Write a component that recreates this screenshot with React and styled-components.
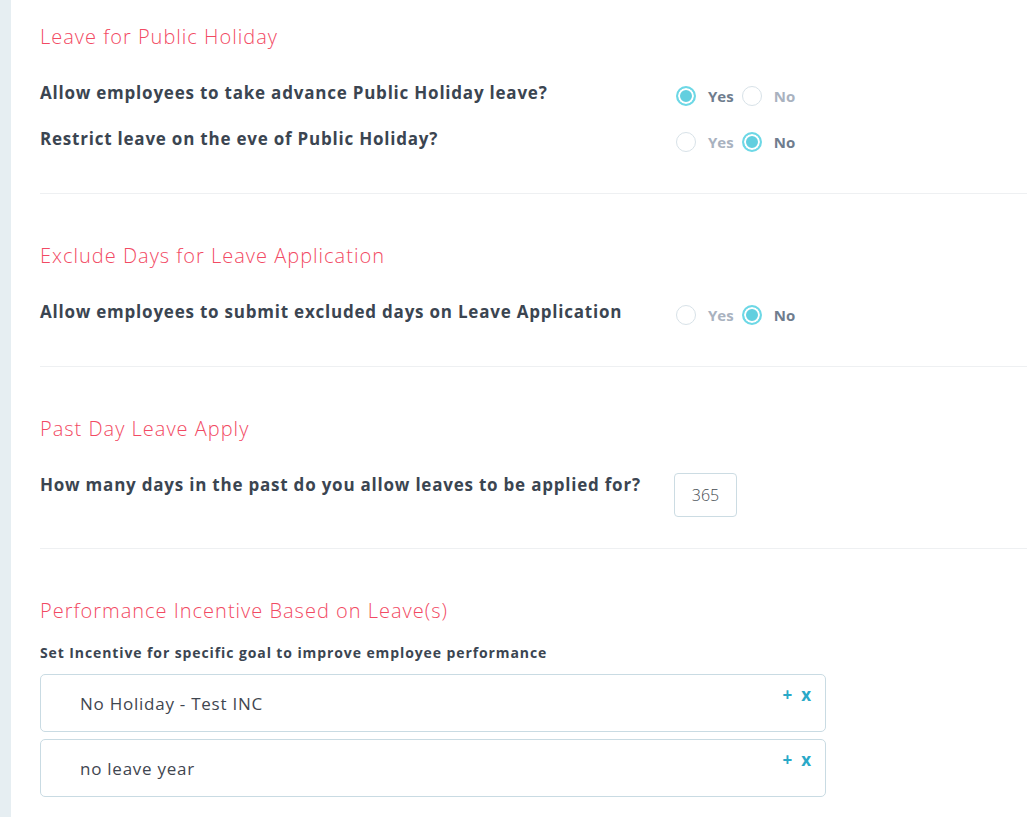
import React from 'react'
import styled, { createGlobalStyle } from 'styled-components'

const GlobalStyle = createGlobalStyle`
	html, body {
		margin: 0;
		padding: 0;
		background: #ffffff;
		font-family: "Open Sans", "DejaVu Sans", sans-serif;
	}
`

const sections = [
	{
		title: 'Leave for Public Holiday',
		questions: [
			{ label: 'Allow employees to take advance Public Holiday leave?', value: 'yes' },
			{ label: 'Restrict leave on the eve of Public Holiday?', value: 'no' },
		],
	},
	{
		title: 'Exclude Days for Leave Application',
		questions: [
			{ label: 'Allow employees to submit excluded days on Leave Application', value: 'no' },
		],
	},
]

const incentives = ['No Holiday - Test INC', 'no leave year']

const RadioPair = ({ value }) => (
	<RadioGroup>
		<Option>
			<Circle $checked={value === 'yes'} />
			<OptionLabel $checked={value === 'yes'}>Yes</OptionLabel>
		</Option>
		<Option>
			<Circle $checked={value === 'no'} />
			<OptionLabel $checked={value === 'no'}>No</OptionLabel>
		</Option>
	</RadioGroup>
)

const App = () => {
	const renderSections = () => sections.map(({ title, questions }, idx) => (
		<Section key={title} $first={idx === 0}>
			<Heading>{title}</Heading>
			<Rows>
				{questions.map(({ label, value }) => (
					<Row key={label}>
						<Question>{label}</Question>
						<RadioPair value={value} />
					</Row>
				))}
			</Rows>
		</Section>
	))

	return (
		<Wrapper>
			<GlobalStyle />
			<Strip />
			<Content>
				{renderSections()}

				<Section $pb={31}>
					<Heading>Past Day Leave Apply</Heading>
					<Rows>
						<Row>
							<Question>How many days in the past do you allow leaves to be applied for?</Question>
							<DaysInput type='text' defaultValue='365' />
						</Row>
					</Rows>
				</Section>

				<Section $noBorder>
					<Heading>Performance Incentive Based on Leave(s)</Heading>
					<SubTitle>Set Incentive for specific goal to improve employee performance</SubTitle>
					<Cards>
						{incentives.map((name) => (
							<Card key={name}>
								<CardText>{name}</CardText>
								<Actions>
									<Action>+</Action>
									<Action>x</Action>
								</Actions>
							</Card>
						))}
					</Cards>
				</Section>
			</Content>
		</Wrapper>
	)
}

export default App


const Wrapper = styled.div`
	display: flex;
	min-height: 817px;
	width: 100%;
	overflow: hidden;
`

const Strip = styled.div`
	width: 11px;
	flex-shrink: 0;
	background-color: #e6eef2;
`

const Content = styled.div`
	flex: 1;
	padding-left: 29px;
`

const Section = styled.div`
	padding-top: ${({ $first }) => ($first ? 24 : 49)}px;
	padding-bottom: ${({ $pb }) => ($pb != null ? $pb : 41)}px;
	border-bottom: ${({ $noBorder }) => ($noBorder ? 'none' : '1px solid #eef0f2')};
`

const Heading = styled.h3`
	margin: 0;
	height: 26px;
	line-height: 26px;
	font-size: 20px;
	font-weight: 300;
	letter-spacing: 1px;
	color: #f24a63;
`

const Rows = styled.div`
	display: flex;
	flex-direction: column;
	gap: 20px;
	margin-top: 30px;
`

const Row = styled.div`
	display: flex;
	align-items: flex-start;
`

const Question = styled.div`
	width: 634px;
	flex-shrink: 0;
	line-height: 26px;
	font-size: 17px;
	font-weight: 700;
	letter-spacing: 0.78px;
	color: #3b4551;
`

const RadioGroup = styled.div`
	display: flex;
	align-items: center;
	gap: 8px;
	margin-top: 6px;
	padding-left: 2px;
`

const Option = styled.label`
	display: flex;
	align-items: center;
	gap: 12px;
`

const Circle = styled.span`
	box-sizing: border-box;
	width: 20px;
	height: 20px;
	border-radius: 50%;
	background-color: ${({ $checked }) => ($checked ? '#62cfdf' : '#ffffff')};
	border: ${({ $checked }) => ($checked ? '2px solid #6dd8e6' : '1.5px solid #d8e2e8')};
	box-shadow: ${({ $checked }) => ($checked ? 'inset 0 0 0 2px #ffffff' : 'none')};
`

const OptionLabel = styled.span`
	font-size: 15px;
	font-weight: 700;
	color: ${({ $checked }) => ($checked ? '#6f7d8e' : '#a9b2bf')};
`

const DaysInput = styled.input`
	box-sizing: border-box;
	width: 63px;
	height: 44px;
	margin-top: 1px;
	border: 1px solid #ccdce3;
	border-radius: 4px;
	text-align: center;
	font-family: inherit;
	font-size: 16px;
	font-weight: 300;
	color: #444b52;
	outline: none;
`

const SubTitle = styled.div`
	margin-top: 19px;
	line-height: 20px;
	font-size: 14px;
	font-weight: 700;
	letter-spacing: 0.9px;
	color: #3b4551;
`

const Cards = styled.div`
	display: flex;
	flex-direction: column;
	gap: 7px;
	margin-top: 11px;
	width: 786px;
`

const Card = styled.div`
	box-sizing: border-box;
	display: flex;
	justify-content: space-between;
	align-items: center;
	height: 58px;
	padding: 0 14px 0 39px;
	border: 1px solid #c9dbe3;
	border-radius: 5px;
`

const CardText = styled.span`
	font-size: 17px;
	letter-spacing: 0.75px;
	color: #3f4650;
`

const Actions = styled.div`
	display: flex;
	gap: 9px;
	align-self: flex-start;
	margin-top: 8px;
`

const Action = styled.span`
	font-size: 17px;
	font-weight: 700;
	color: #2aa9c8;
`
